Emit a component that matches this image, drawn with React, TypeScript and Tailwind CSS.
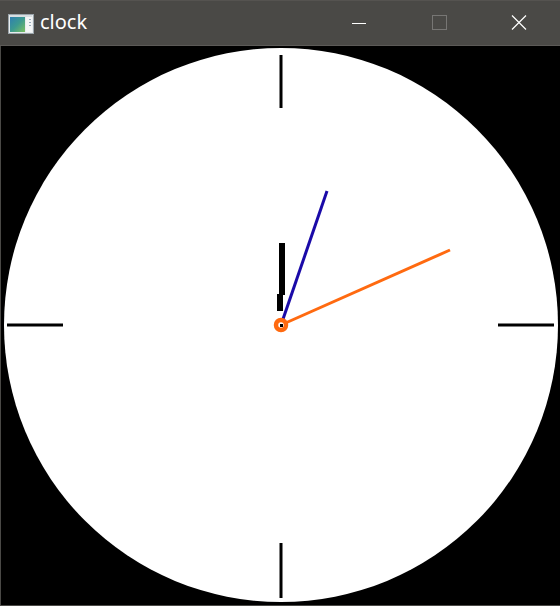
import React from "react";

function AppIcon() {
  return (
    <svg width="26" height="20" viewBox="0 0 26 20">
      <defs>
        <linearGradient id="g" x1="0" y1="0" x2="1" y2="1">
          <stop offset="0" stopColor="#2f7fb0" />
          <stop offset="0.5" stopColor="#3c9a90" />
          <stop offset="1" stopColor="#7cc060" />
        </linearGradient>
      </defs>
      <rect x="0.5" y="0.5" width="25" height="19" fill="#e8ecee" stroke="#9aa4aa" />
      <rect x="2" y="3" width="15" height="15" fill="url(#g)" />
      <rect x="18" y="3" width="6" height="15" fill="#f4f6f6" />
      <rect x="21" y="5" width="2" height="1" fill="#9ab" />
      <rect x="21" y="8" width="2" height="1" fill="#9ab" />
      <rect x="21" y="11" width="2" height="1" fill="#9ab" />
      <rect x="2" y="1.5" width="22" height="1" fill="#c8d0d4" />
    </svg>
  );
}

export default function App() {
  return (
    <div className="w-[560px] h-[606px] flex flex-col bg-[#4a4946] overflow-hidden">
      <div className="h-[45px] flex items-center shrink-0 bg-[#4a4946] border-t border-[#555350]">
        <div className="ml-[8px] mt-[1px] flex items-center">
          <AppIcon />
        </div>
        <span
          className="ml-[6px] text-white text-[20px] leading-none mt-[-2px]"
          style={{ fontFamily: '"Segoe UI", "Noto Sans", "Open Sans", sans-serif' }}
        >
          clock
        </span>
        <div className="ml-auto flex items-center h-full">
          <div className="w-[80px] h-full flex items-center justify-center">
            <svg width="16" height="16" viewBox="0 0 16 16">
              <rect x="1" y="8" width="14" height="1" fill="#ffffff" />
            </svg>
          </div>
          <div className="w-[80px] h-full flex items-center justify-center">
            <svg width="16" height="16" viewBox="0 0 16 16">
              <rect x="1.5" y="0.5" width="14" height="14" fill="none" stroke="#777674" />
            </svg>
          </div>
          <div className="w-[80px] h-full flex items-center justify-center mr-[1px]">
            <svg width="16" height="16" viewBox="0 0 16 16">
              <path d="M1 0.5 L15 14.5 M15 0.5 L1 14.5" stroke="#ffffff" strokeWidth="1.2" />
            </svg>
          </div>
        </div>
      </div>
      <div className="h-[1px] bg-[#5c5a57] shrink-0" />
      <div className="flex-1 flex pl-[1px] pb-[1px]">
        <div className="flex-1 bg-black">
          <svg width="559" height="559" viewBox="0 0 559 559" className="block">
            <circle cx="280" cy="279" r="277" fill="#ffffff" />
            {/* ticks */}
            <rect x="278.5" y="9" width="3" height="53" fill="#000" />
            <rect x="278.5" y="497" width="3" height="55" fill="#000" />
            <rect x="6" y="277.5" width="56" height="3" fill="#000" />
            <rect x="497" y="277.5" width="56" height="3" fill="#000" />
            {/* hour hand */}
            <rect x="278" y="197" width="6" height="52" fill="#000" />
            <rect x="276" y="248" width="6" height="17" fill="#000" />
            {/* minute hand */}
            <line x1="280" y1="279" x2="326" y2="145" stroke="#1a0aa8" strokeWidth="3" />
            {/* second hand */}
            <line x1="280" y1="279" x2="449" y2="204" stroke="#ff6a10" strokeWidth="3" />
            {/* center */}
            <circle cx="280" cy="279" r="5" fill="#ffffff" stroke="#ff6a10" strokeWidth="4.5" />
            <rect x="279" y="278" width="3" height="3" fill="#000" />
          </svg>
        </div>
      </div>
    </div>
  );
}
